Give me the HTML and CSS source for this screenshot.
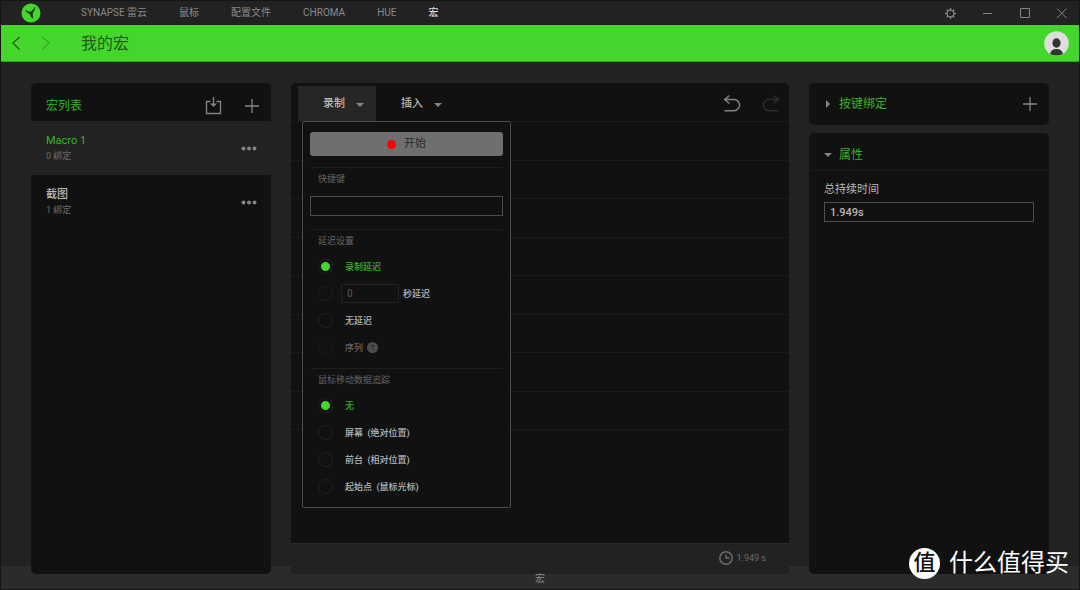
FILE: index.html
```html
<!DOCTYPE html>
<html lang="zh-CN">
<head>
<meta charset="utf-8">
<title>我的宏</title>
<meta name="viewport" content="width=device-width, initial-scale=1">
<link rel="stylesheet" href="styles.css">
</head>
<body>
<div class="app">
  <header class="topbar">
    <svg class="logo" viewBox="0 0 20 20" aria-hidden="true"><circle cx="10" cy="10" r="9.5" fill="#44d62c"/><path d="M4.600 7.600Q7.500 9.800 9.800 9Q12.500 8 13.800 4.600Q13.200 8 11.600 9.700Q10.800 11.800 11.600 15.200Q9.400 13 9.300 10.700Q7 10.300 4.600 7.600Z" fill="#1b3d16" stroke="#1b3d16" stroke-width="1" stroke-linejoin="round"/></svg>
    <nav class="tabs">
      <a href="#">SYNAPSE 雷云</a>
      <a href="#">鼠标</a>
      <a href="#">配置文件</a>
      <a href="#">CHROMA</a>
      <a href="#">HUE</a>
      <a href="#" class="active">宏</a>
    </nav>
    <div class="window-controls">
      <button aria-label="设置"><svg viewBox="0 0 13 13"><g fill="none" stroke="#858585"><circle cx="6.500" cy="6.500" r="3.400" stroke-width="1.200"/><path stroke-width="1.300" d="M6.500 3V1M6.500 10v2M3 6.500H1M10 6.500h2M4 4L2.600 2.600M9 4l1.400-1.400M4 9l-1.400 1.400M9 9l1.400 1.400"/></g></svg></button>
      <button aria-label="最小化"><svg viewBox="0 0 13 13"><path d="M2 6.500h9" stroke="#858585"/></svg></button>
      <button aria-label="最大化"><svg viewBox="0 0 13 13"><path d="M2.500 1.500h9v9h-9z" fill="none" stroke="#858585"/></svg></button>
      <button aria-label="关闭"><svg viewBox="0 0 13 13"><path d="M2 1.500l9.500 9.500M11.500 1.500L2 11" stroke="#858585"/></svg></button>
    </div>
  </header>

  <div class="titlebar">
    <button class="nav-arrow" aria-label="后退"><svg viewBox="0 0 10 16"><path d="M8.500 2L2 8l6.500 6.500" fill="none" stroke="#1f6414" stroke-width="1.300"/></svg></button>
    <button class="nav-arrow" aria-label="前进"><svg viewBox="0 0 10 16"><path d="M1.500 2L8 8l-6.500 6.500" fill="none" stroke="#36a824" stroke-width="1.200"/></svg></button>
    <h1>我的宏</h1>
    <button class="avatar" aria-label="用户"><svg viewBox="0 0 25 25"><circle cx="12.500" cy="12.500" r="12.300" fill="#dedede"/><ellipse cx="12.500" cy="12" rx="4.100" ry="4.700" fill="#333"/><path d="M6 22.900Q7 18 12.500 18T19 22.900Q12.500 26.200 6 22.900Z" fill="#333"/></svg></button>
  </div>

  <main class="workspace">
    <section class="panel macros">
      <header class="macros-head">
        <h2>宏列表</h2>
        <button aria-label="导入"><svg width="18" height="20" viewBox="0 0 18 20"><path d="M5.500 5.500H1.500v12h14v-12h-4M8.500 1v9" fill="none" stroke="#858585" stroke-width="1.300"/><path d="M5 7.500h7L8.500 11z" fill="#858585"/></svg></button>
        <button aria-label="添加宏"><svg width="16" height="16" viewBox="0 0 16 16"><path d="M8 1v14M1 8h14" stroke="#858585" stroke-width="1.300"/></svg></button>
      </header>
      <ul class="macro-list">
        <li class="macro selected"><div><h3>Macro 1</h3><p>0 綁定</p></div><button aria-label="更多"><svg width="16" height="6" viewBox="0 0 16 6" fill="#858585"><circle cx="2.500" cy="3.500" r="2"/><circle cx="8" cy="3.500" r="2"/><circle cx="13.500" cy="3.500" r="2"/></svg></button></li>
        <li class="macro"><div><h3>截图</h3><p>1 綁定</p></div><button aria-label="更多"><svg width="16" height="6" viewBox="0 0 16 6" fill="#858585"><circle cx="2.500" cy="3.500" r="2"/><circle cx="8" cy="3.500" r="2"/><circle cx="13.500" cy="3.500" r="2"/></svg></button></li>
      </ul>
    </section>

    <section class="panel editor">
      <div class="toolbar">
        <div class="record">
          <button class="tool open" aria-expanded="true">录制<span class="caret"></span></button>
          <form class="menu">
            <button type="button" class="start"><span class="dot"></span>开始</button>
            <div class="group hotkey">
              <label class="caption" for="hotkey">快捷键</label>
              <input id="hotkey" type="text">
            </div>
            <fieldset class="group">
              <legend class="caption">延迟设置</legend>
              <label class="option"><input type="radio" name="delay" checked><span>录制延迟</span></label>
              <div class="option"><input type="radio" name="delay" id="delay-sec" aria-label="秒延迟"><input class="seconds" type="text" value="0" aria-label="秒"><label for="delay-sec">秒延迟</label></div>
              <label class="option"><input type="radio" name="delay"><span>无延迟</span></label>
              <label class="option disabled"><input type="radio" name="delay" disabled><span>序列</span><i class="help">?</i></label>
            </fieldset>
            <fieldset class="group last">
              <legend class="caption">鼠标移动数据追踪</legend>
              <label class="option"><input type="radio" name="track" checked><span>无</span></label>
              <label class="option"><input type="radio" name="track"><span>屏幕&nbsp; (绝对位置)</span></label>
              <label class="option"><input type="radio" name="track"><span>前台&nbsp; (相对位置)</span></label>
              <label class="option"><input type="radio" name="track"><span>起始点&nbsp; (鼠标光标)</span></label>
            </fieldset>
          </form>
        </div>
        <button class="tool">插入<span class="caret"></span></button>
        <div class="history">
          <button aria-label="撤销"><svg width="18" height="18" viewBox="0 0 18 18"><path d="M6.500 0.500L1.500 4.500l5 4M1.500 4.500h9.500a5.600 5.600 0 0 1 0 11.200H1.500" fill="none" stroke="#858585" stroke-width="1.400"/></svg></button>
          <button aria-label="重做"><svg width="18" height="18" viewBox="0 0 18 18"><path d="M11.500 0.500l5 4-5 4M16.500 4.500H7a5.600 5.600 0 0 0 0 11.200H16.500" fill="none" stroke="#2d2d2d" stroke-width="1.400"/></svg></button>
        </div>
      </div>
      <div class="rows"><i></i><i></i><i></i><i></i><i></i><i></i><i></i><i></i></div>
      <footer class="duration"><svg width="14" height="14" viewBox="0 0 14 14"><g fill="none" stroke="#6c6c6c"><circle cx="7" cy="7" r="6.200" stroke-width="1.500"/><path d="M7 3.500V7h3.500" stroke-width="1.300"/></g></svg><span>1.949 s</span></footer>
    </section>

    <aside class="side">
      <section class="panel binding">
        <span class="caret right"></span><h2>按键绑定</h2>
        <button aria-label="添加绑定"><svg width="16" height="16" viewBox="0 0 16 16"><path d="M8 1v14M1 8h14" stroke="#858585" stroke-width="1.300"/></svg></button>
      </section>
      <section class="panel props">
        <header><span class="caret"></span><h2>属性</h2></header>
        <div class="field"><label for="total">总持续时间</label><input id="total" type="text" value="1.949s"></div>
      </section>
    </aside>
  </main>
  <footer class="status">宏</footer>
  <div class="brand"><span class="seal">值</span><span>什么值得买</span></div>
</div>
</body>
</html>
```
FILE: styles.css
```css
* { box-sizing: border-box; margin: 0; padding: 0; }

body {
  background: #222;
  color: #b8b8b8;
  font: 9px/14px Roboto, "Noto Sans CJK SC", sans-serif;
}

button, input { font: inherit; color: inherit; background: none; border: 0; outline: 0; }
button { cursor: pointer; }
button svg { display: block; }
fieldset { border: 0; }
ul { list-style: none; }
a { color: inherit; text-decoration: none; }
h2 { color: #35b522; font-size: 12px; line-height: 18px; font-weight: 400; }

.app {
  position: relative;
  display: flex;
  flex-direction: column;
  min-height: 100vh;
  border: 1px solid #151515;
}

.topbar {
  display: flex;
  align-items: center;
  height: 24px;
  padding: 0 11px 0 20px;
  background: #222;
}
.logo { width: 20px; height: 20px; }
.tabs { display: flex; gap: 32px; margin-left: 40px; font-size: 10px; color: #8a8a8a; }
.tabs .active { color: #ddd; font-weight: 500; }
.window-controls { display: flex; gap: 24px; margin-left: auto; }
.window-controls svg { width: 13px; height: 13px; }

.titlebar {
  display: flex;
  align-items: center;
  gap: 20px;
  height: 37px;
  padding: 0 10px;
  background: #44d62c;
  border-bottom: 1px solid #2fae1d;
}
.nav-arrow svg { width: 10px; height: 16px; }
.titlebar h1 { margin-left: 10px; padding-top: 2px; color: #1f5a16; font-size: 16px; line-height: 24px; font-weight: 400; }
.avatar { margin-left: auto; }
.avatar svg { width: 25px; height: 25px; }

.workspace {
  flex: 1;
  display: grid;
  grid-template-columns: 240fr 498fr 240fr;
  gap: 20px;
  padding: 21px 30px 0;
  background: linear-gradient(#2b2b2b, #2b2b2b) bottom / 100% 8px no-repeat #222;
}
.panel { background: #111; border-radius: 5px; }

.macros-head {
  display: flex;
  align-items: center;
  gap: 21px;
  height: 38px;
  padding: 8px 11px 0 15px;
}
.macros-head h2 { margin-right: auto; }
.macro {
  display: flex;
  align-items: center;
  justify-content: space-between;
  height: 54px;
  padding: 0 14px 0 15px;
}
.macro h3 { font-size: 11px; line-height: 16px; font-weight: 500; color: #b8b8b8; }
.macro p { line-height: 15px; color: #6c6c6c; }
.macro.selected { background: #222; }
.macro.selected h3 { color: #35b522; font-weight: 400; }

.editor { display: flex; flex-direction: column; }
.toolbar { display: flex; height: 39px; padding: 3px 9px 0 7px; border-bottom: 1px solid #1a1a1a; }
.record { position: relative; }
.tool {
  display: flex;
  align-items: center;
  gap: 11px;
  height: 35px;
  padding: 0 12px 0 25px;
  font-size: 11px;
  font-weight: 500;
}
.tool.open { background: #262626; }
.caret { border: 4px solid transparent; border-top-color: #858585; border-bottom: 0; margin-top: 2px; }
.caret.right { border: 4px solid transparent; border-left-color: #858585; border-right: 0; margin: 0 2px; }
.history { display: flex; gap: 21px; margin-left: auto; }

.menu {
  position: absolute;
  z-index: 1;
  top: 35px;
  left: 4px;
  width: 209px;
  padding: 10px 7px 7px;
  background: #111;
  border: 1px solid #4d4d4d;
  border-radius: 2px;
}
.start {
  display: flex;
  align-items: center;
  justify-content: center;
  gap: 8px;
  width: 100%;
  height: 24px;
  margin-bottom: 11px;
  background: #6f6f6f;
  border-radius: 3px;
  color: #2b2b2b;
  font-size: 11px;
}
.dot { width: 9px; height: 9px; border-radius: 50%; background: #f00; }
.group { border-top: 1px solid #1e1e1e; padding-bottom: 7px; }
.group.last { padding-bottom: 0; }
.caption { display: block; float: left; width: 100%; padding: 4px 8px 5px; color: #666; }
.group .option { clear: both; }
.hotkey { padding-bottom: 13px; }
.hotkey .caption { float: none; padding-bottom: 10px; }
.hotkey input { display: block; width: 100%; height: 20px; border: 1px solid #4d4d4d; padding: 0 5px; }
.option { display: flex; align-items: center; height: 27px; padding-left: 8px; font-weight: 500; }
.option input[type="radio"] {
  appearance: none;
  width: 15px;
  height: 15px;
  margin-right: 12px;
  border: 1px solid #222;
  border-radius: 50%;
}
.option input[type="radio"]:checked { background: radial-gradient(circle, #44d62c 4px, transparent 5px); }
.option input:checked + span { color: #35b522; }
.option .seconds {
  width: 58px;
  height: 19px;
  margin: 0 4px 0 -4px;
  padding: 0 5px;
  border: 1px solid #222;
  color: #4d4d4d;
  font-size: 10px;
}
.option.disabled { color: #666; }
.option.disabled input { opacity: 0.5; }
.help {
  width: 11px;
  height: 11px;
  margin-left: 4px;
  border-radius: 50%;
  background: #4d4d4d;
  color: #222;
  font-size: 8px;
  line-height: 11px;
  font-style: normal;
  text-align: center;
}

.rows { flex: 1; display: grid; grid-template-rows: repeat(8, 1fr); max-height: 308px; }
.rows i { border-bottom: 1px solid #1a1a1a; }
.duration {
  display: flex;
  align-items: center;
  justify-content: flex-end;
  gap: 4px;
  height: 31px;
  margin-top: auto;
  padding: 0 23px 3px 0;
  background: #222;
  border-top: 1px solid #2b2b2b;
  border-radius: 0 0 5px 5px;
  color: #6c6c6c;
}

.side { display: flex; flex-direction: column; gap: 8px; }
.binding, .props header { display: flex; align-items: center; gap: 7px; padding: 0 11px 0 15px; }
.binding { height: 42px; }
.binding button { margin-left: auto; }
.props { flex: 1; }
.props header { height: 38px; padding-top: 6px; border-bottom: 1px solid #1a1a1a; }
.props .caret { margin-top: 0; }
.field { padding: 11px 15px; }
.field label { display: block; font-size: 11px; line-height: 16px; margin-bottom: 4px; }
.field input {
  display: block;
  width: 100%;
  height: 20px;
  padding: 0 5px;
  border: 1px solid #4d4d4d;
  font-size: 11px;
  font-weight: 500;
}

.status { height: 15px; padding-bottom: 6px; background: #2b2b2b; font-size: 10px; line-height: 9px; text-align: center; color: #8a8a8a; }

.brand {
  position: absolute;
  right: 10px;
  bottom: 10px;
  display: flex;
  align-items: center;
  gap: 9px;
  color: #fff;
  font-size: 24px;
  line-height: 32px;
}
.seal {
  width: 31px;
  height: 31px;
  border-radius: 50%;
  background: #fff;
  color: #111;
  font-size: 22px;
  font-weight: 500;
  line-height: 29px;
  text-align: center;
}
```
